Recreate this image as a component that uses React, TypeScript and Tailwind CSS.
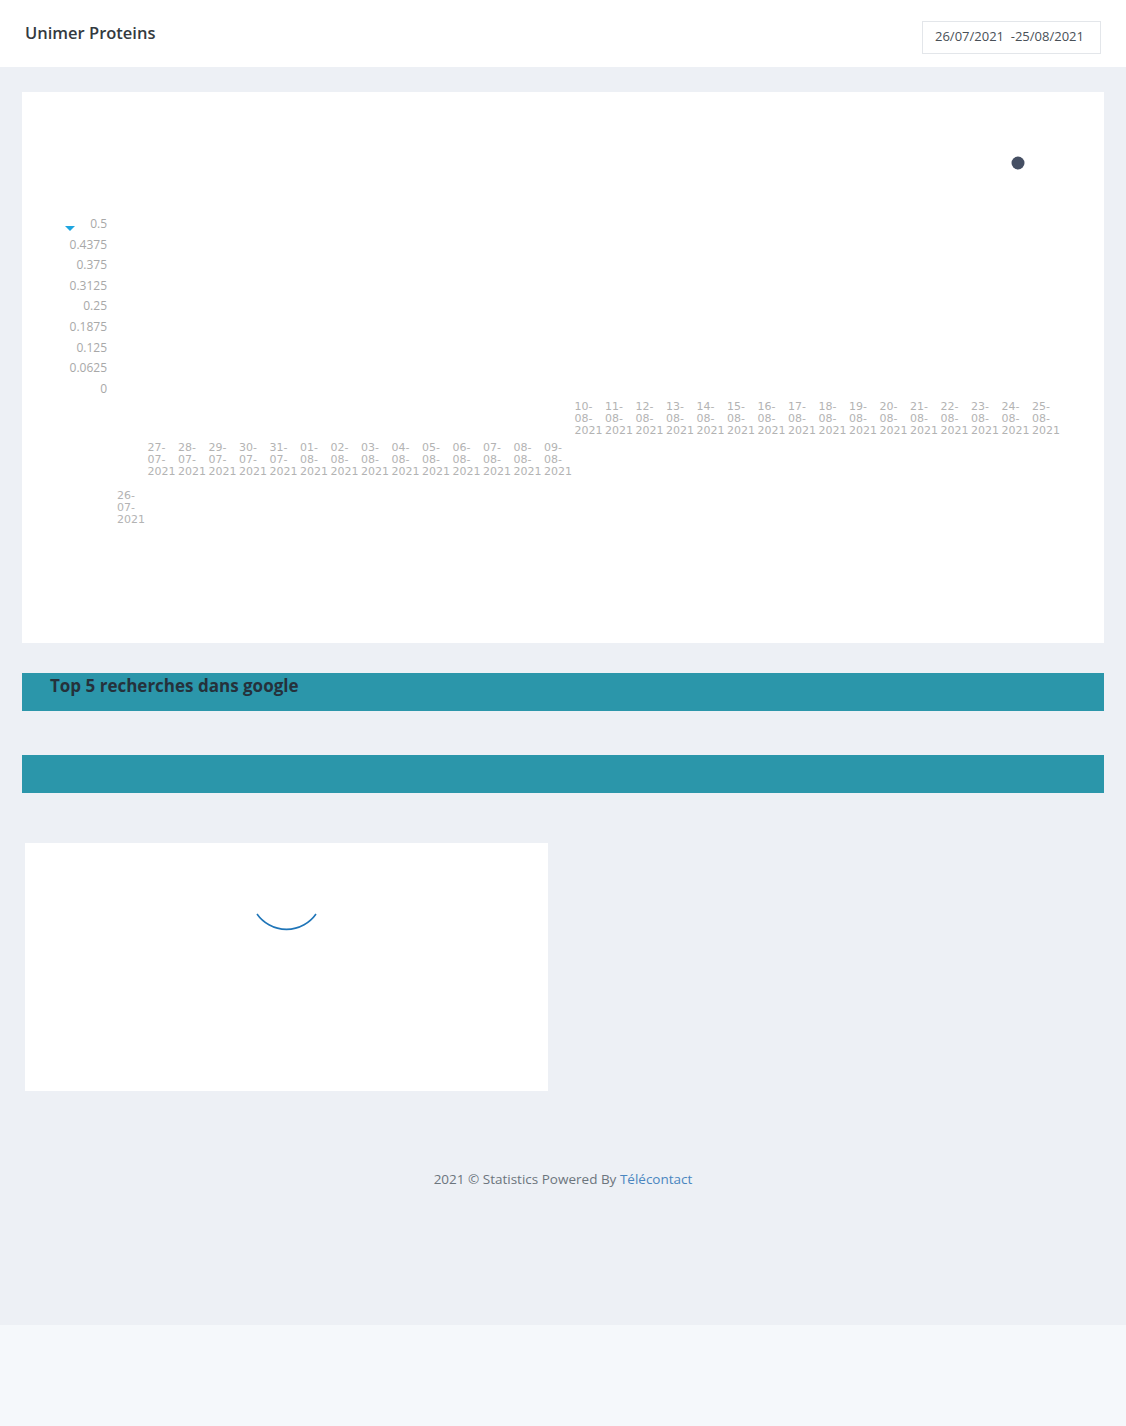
const dates = [
  "26-07", "27-07", "28-07", "29-07", "30-07", "31-07",
  "01-08", "02-08", "03-08", "04-08", "05-08", "06-08", "07-08", "08-08", "09-08",
  "10-08", "11-08", "12-08", "13-08", "14-08", "15-08", "16-08", "17-08", "18-08",
  "19-08", "20-08", "21-08", "22-08", "23-08", "24-08", "25-08",
];

const ticks = ["0.5", "0.4375", "0.375", "0.3125", "0.25", "0.1875", "0.125", "0.0625", "0"];

function Chart() {
  return (
    <svg width="1082" height="551" viewBox="22 92 1082 551" className="block">
      <polygon points="65,226 75,226 70,231" fill="#1ea5e0" />
      {ticks.map((t, i) => (
        <text
          key={t}
          x={107}
          y={228 + i * 20.6}
          textAnchor="end"
          fontSize="12"
          fill="#a8a8a8"
          fontFamily="'Open Sans', sans-serif"
        >
          {t}
        </text>
      ))}
      {dates.map((d, i) => {
        const [day, month] = d.split("-");
        const x = 117 + i * 30.5;
        const top = i === 0 ? 499 : i < 15 ? 451 : 410;
        return (
          <text
            key={d}
            x={x}
            fontSize="11"
            fill="#b3b3b3"
            fontFamily="'DejaVu Sans', sans-serif"
          >
            <tspan x={x} y={top}>{day}-</tspan>
            <tspan x={x} y={top + 12}>{month}-</tspan>
            <tspan x={x} y={top + 24}>2021</tspan>
          </text>
        );
      })}
      <circle cx="1018" cy="163" r="6.5" fill="#454f63" />
    </svg>
  );
}

export default function App() {
  return (
    <div className="flex min-h-[1426px] flex-col bg-[#f5f8fb] font-['Open_Sans',sans-serif]">
      <header className="flex h-[67px] items-center justify-between bg-white pl-[25px] pr-[25px]">
        <h1 className="text-[16.5px] font-semibold text-[#343a40]">Unimer Proteins</h1>
        <div className="mt-[7px] flex h-[33px] w-[179px] items-center border border-[#e3e6ea] px-3 text-[13px] text-[#495057]">
          26/07/2021 &nbsp;-25/08/2021
        </div>
      </header>

      <main className="flex h-[1258px] flex-col bg-[#edf0f5] px-[22px] pt-[25px]">
        <div className="bg-white">
          <Chart />
        </div>

        <div className="mt-[30px] h-[38px] bg-[#2b96aa] pl-[28px]">
          <h2 className="text-[17px] font-bold text-[#25313b]">Top 5 recherches dans google</h2>
        </div>

        <div className="mt-[44px] h-[38px] bg-[#2b96aa]" />

        <div className="ml-[3px] mt-[50px] flex h-[248px] w-[523px] justify-center bg-white pt-[68px]">
          <svg width="64" height="20" viewBox="0 0 64 20" className="-ml-[1px]">
            <path d="M3 3 A36 36 0 0 0 62 3" fill="none" stroke="#1f75b8" strokeWidth="1.6" />
          </svg>
        </div>

        <p className="mt-[78px] text-center text-[13.5px] text-[#6c757d]">
          2021 © Statistics Powered By <span className="text-[#4a86c0]">Télécontact</span>
        </p>
      </main>
    </div>
  );
}
